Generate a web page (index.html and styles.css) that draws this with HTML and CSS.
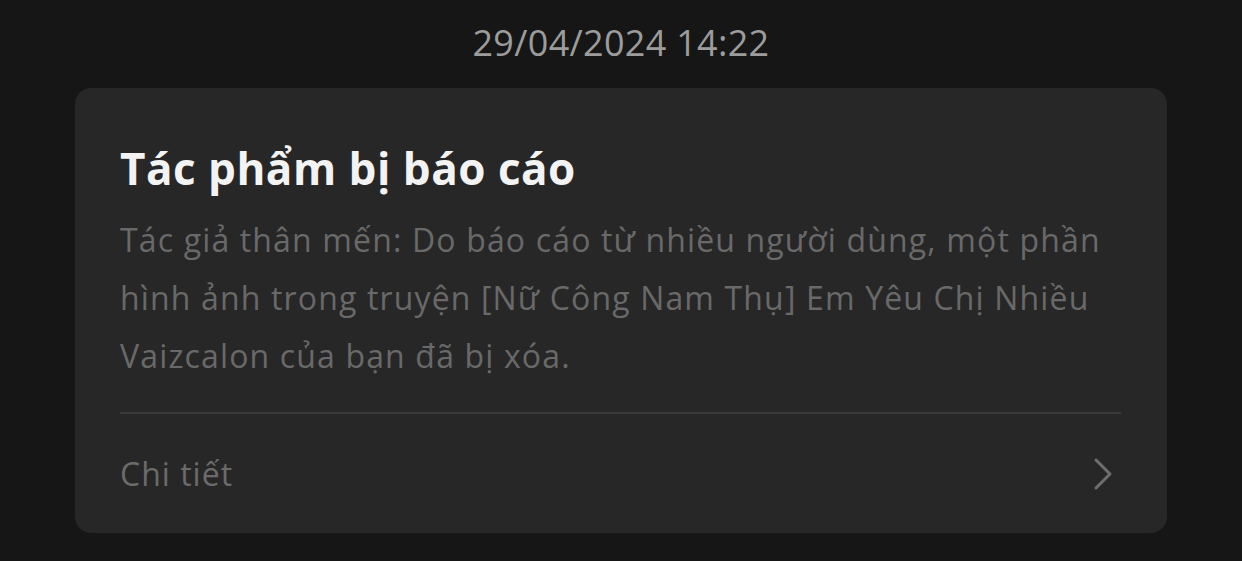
FILE: index.html
```html
<!DOCTYPE html>
<html lang="vi">
<head>
    <meta charset="UTF-8">
    <meta name="viewport" content="width=device-width, initial-scale=1.0">
    <title>Thông báo</title>
    <link rel="stylesheet" href="styles.css">
</head>
<body>

    <div class="timestamp">29/04/2024 14:22</div>

    <div class="card">
        <h2 class="card-title">Tác phẩm bị báo cáo</h2>
        <p class="card-text">Tác giả thân mến: Do báo cáo từ nhiều người dùng, một phần hình ảnh trong truyện [Nữ Công Nam Thụ] Em Yêu Chị Nhiều Vaizcalon của bạn đã bị xóa.</p>
        <div class="card-footer">
            <span>Chi tiết</span>
            <svg class="chevron" width="24" height="34" viewBox="0 0 24 34">
                <path d="M5 3 L19 17 L5 31" fill="none" stroke="#6e6e6e" stroke-width="3" stroke-linecap="round" stroke-linejoin="round"/>
            </svg>
        </div>
    </div>

</body>
</html>
```

FILE: styles.css
```css
body {
    font-family: "Open Sans", "Noto Sans", sans-serif;
    background-color: #161616;
    margin: 0;
    padding: 0 75px;
}
.timestamp {
    height: 84px;
    margin-bottom: 4px;
    display: flex;
    align-items: center;
    justify-content: center;
    color: #9c9c9c;
    font-size: 36px;
    letter-spacing: 0.3px;
}
.card {
    background-color: #272727;
    border-radius: 16px;
    padding: 55px 46px 0 45px;
}
.card-title {
    margin: 0;
    color: #f3f3f3;
    font-size: 44px;
    font-weight: bold;
    line-height: 50px;
    letter-spacing: 0.5px;
}
.card-text {
    margin: 18px 0 0;
    color: #696969;
    font-size: 32px;
    line-height: 58px;
    letter-spacing: 1.15px;
    padding-bottom: 27px;
    border-bottom: 2px solid #3a3a3a;
}
.card-footer {
    height: 119px;
    display: flex;
    align-items: center;
    justify-content: space-between;
    color: #6b6b6b;
    font-size: 32px;
    letter-spacing: 1px;
}
.chevron {
    margin-right: 6px;
}
```
